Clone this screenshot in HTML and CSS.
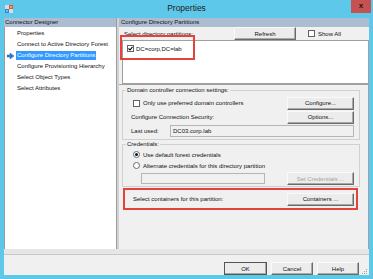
FILE: index.html
```html
<!DOCTYPE html>
<html lang="en">
<head>
  <meta charset="UTF-8">
  <title>Properties</title>
  <link rel="stylesheet" href="styles.css">
</head>
<body>

  <div class="window">
    <div class="titlebar">
      <svg class="app-icon" width="8" height="8" viewBox="0 0 8 8">
        <rect x="0" y="0" width="8" height="8" fill="#d9dde3"/>
        <rect x="4" y="0" width="4" height="4" fill="#e0552f"/>
        <rect x="5" y="1" width="2" height="2" fill="#f3a43a"/>
        <rect x="0" y="4" width="4" height="4" fill="#3a7fd0"/>
        <rect x="1" y="5" width="2" height="2" fill="#7fb4ec"/>
      </svg>
      <div class="title">Properties</div>
      <div class="close">x</div>
    </div>

    <div class="client">
      <div class="main">
        <div class="nav">
          <div class="pane-header">Connector Designer</div>
          <ul class="nav-list">
            <li class="nav-item"><span class="nav-mark"></span><span class="nav-text">Properties</span></li>
            <li class="nav-item"><span class="nav-mark"></span><span class="nav-text">Connect to Active Directory Forest</span></li>
            <li class="nav-item active">
              <span class="nav-mark">
                <svg width="7" height="6" viewBox="0 0 7 6"><polygon points="0,2 3,2 3,0 7,3 3,6 3,4 0,4" fill="#2a7de1" stroke="#1b4f99" stroke-width="0.4"/></svg>
              </span>
              <span class="nav-text">Configure Directory Partitions</span>
            </li>
            <li class="nav-item"><span class="nav-mark"></span><span class="nav-text">Configure Provisioning Hierarchy</span></li>
            <li class="nav-item"><span class="nav-mark"></span><span class="nav-text">Select Object Types</span></li>
            <li class="nav-item"><span class="nav-mark"></span><span class="nav-text">Select Attributes</span></li>
          </ul>
        </div>

        <div class="splitter"></div>

        <div class="page">
          <div class="pane-header page-header">Configure Directory Partitions</div>

          <div class="partitions">
            <div class="partitions-bar">
              <span class="bar-label">Select directory partitions:</span>
              <button class="btn btn-refresh">Refresh</button>
              <label class="check show-all"><span class="box"></span>Show All</label>
            </div>
            <div class="listbox">
              <div class="list-row">
                <span class="box checked">
                  <svg width="5" height="5" viewBox="0 0 5 5"><polyline points="0.5,2.5 2,4 4.5,0.8" fill="none" stroke="#000" stroke-width="1.1"/></svg>
                </span>
                DC=corp,DC=lab
              </div>
            </div>
            <div class="mark mark-partition"></div>
          </div>

          <div class="settings">
            <fieldset class="group">
              <legend>Domain controller connection settings:</legend>
              <div class="group-body">
                <div class="row">
                  <label class="check"><span class="box"></span>Only use preferred domain controllers</label>
                  <button class="btn btn-side">Configure...</button>
                </div>
                <div class="row">
                  <span>Configure Connection Security:</span>
                  <button class="btn btn-side">Options...</button>
                </div>
                <div class="row">
                  <span class="field-label">Last used:</span>
                  <div class="textbox">DC03.corp.lab</div>
                </div>
              </div>
            </fieldset>

            <fieldset class="group">
              <legend>Credentials:</legend>
              <div class="group-body cred-body">
                <div class="radio-row"><span class="radio selected"></span>Use default forest credentials</div>
                <div class="radio-row"><span class="radio"></span>Alternate credentials for this directory partition</div>
                <div class="row cred-row">
                  <div class="textbox textbox-cred"></div>
                  <button class="btn btn-side" disabled>Set Credentials ...</button>
                </div>
              </div>
            </fieldset>

            <div class="containers-row">
              <span>Select containers for this partition:</span>
              <button class="btn btn-side">Containers ...</button>
            </div>
          </div>
        </div>
      </div>

      <div class="footer">
        <div class="footer-sep"></div>
        <div class="footer-bar">
          <button class="btn btn-dialog btn-default">OK</button>
          <button class="btn btn-dialog">Cancel</button>
          <button class="btn btn-dialog">Help</button>
          <svg class="grip" width="7" height="7" viewBox="0 0 7 7">
            <rect x="5" y="1" width="1" height="1" fill="#a0a0a0"/>
            <rect x="3" y="3" width="1" height="1" fill="#a0a0a0"/>
            <rect x="5" y="3" width="1" height="1" fill="#a0a0a0"/>
            <rect x="1" y="5" width="1" height="1" fill="#a0a0a0"/>
            <rect x="3" y="5" width="1" height="1" fill="#a0a0a0"/>
            <rect x="5" y="5" width="1" height="1" fill="#a0a0a0"/>
          </svg>
        </div>
      </div>
    </div>
  </div>

</body>
</html>
```

FILE: styles.css
```css
body {
  margin: 0;
  font-family: "Liberation Sans", Arial, sans-serif;
  font-size: 6px;
  color: #111;
  background: #5ec8ea;
}

.window {
  width: 373px;
  height: 279px;
  background: #5ec8ea;
  display: flex;
  flex-direction: column;
}

/* title bar */
.titlebar {
  height: 18px;
  flex: none;
  display: grid;
  grid-template-columns: 1fr auto 1fr;
  align-items: start;
}

.app-icon {
  margin: 5px 0 0 5px;
}

.title {
  font-size: 8.5px;
  line-height: 17px;
  color: #1e1e1e;
}

.close {
  justify-self: end;
  margin-right: 2px;
  width: 20px;
  height: 13px;
  background: #c75150;
  color: #1a1a1a;
  font-weight: bold;
  font-size: 8px;
  line-height: 12px;
  text-align: center;
}

.client {
  flex: 1;
  margin: 0 4px 4px 4px;
  background: #f0f0f0;
  display: flex;
  flex-direction: column;
}

.main {
  height: 231px;
  display: flex;
}

/* left navigation */
.nav {
  width: 112px;
  display: flex;
  flex-direction: column;
}

.pane-header {
  height: 9px;
  line-height: 9px;
  padding-left: 1px;
  background: #adbdd1;
  white-space: nowrap;
  overflow: hidden;
}

.page-header {
  padding-left: 2px;
}

.nav-list {
  flex: 1;
  margin: 0;
  padding: 1px 0 0;
  list-style: none;
  background: #fff;
  border-left: 1px solid #9b9b9b;
}

.nav-item {
  height: 11px;
  display: flex;
  align-items: center;
  white-space: nowrap;
}

.nav-mark {
  width: 9px;
  padding-left: 2px;
  display: flex;
  align-items: center;
}

.nav-text {
  height: 9px;
  line-height: 9px;
  padding: 0 1px;
}

.nav-item.active .nav-text {
  background: #3399ff;
  color: #fff;
}

.splitter {
  width: 2px;
  background: #d2d2d2;
  border-left: 1px solid #9c9c9c;
}

/* right page */
.page {
  flex: 1;
  display: flex;
  flex-direction: column;
}

.partitions {
  position: relative;
  padding-left: 3px;
}

.partitions-bar {
  height: 13px;
  display: flex;
  align-items: center;
}

.bar-label {
  width: 110px;
  margin-left: 2px;
}

.btn {
  font-family: "Liberation Sans", Arial, sans-serif;
  font-size: 6px;
  color: #111;
  padding: 0;
  margin: 0;
  height: 13px;
  background: #ececec;
  border: 1px solid;
  border-color: #fafafa #6b6b6b #6b6b6b #fafafa;
  box-shadow: inset -1px -1px 0 #a8a8a8;
  white-space: nowrap;
}

.btn:disabled {
  color: #a3a3a3;
}

.btn-refresh {
  width: 62px;
}

.check {
  display: flex;
  align-items: center;
  white-space: nowrap;
}

.show-all {
  margin-left: 12px;
}

.box {
  width: 7px;
  height: 7px;
  box-sizing: border-box;
  border: 1px solid #626262;
  background: #fff;
  margin-right: 3px;
  display: flex;
  align-items: center;
  justify-content: center;
  flex: none;
}

.listbox {
  height: 44px;
  box-sizing: border-box;
  background: #fff;
  border: 1px solid #a0a0a0;
  padding: 4px 0 0 4px;
}

.list-row {
  display: flex;
  align-items: center;
  height: 7px;
}

.box.checked {
  margin-right: 2px;
}

.mark {
  position: absolute;
  border: 2px solid #e5423d;
  box-sizing: border-box;
}

.mark-partition {
  left: 1px;
  top: 8px;
  width: 75px;
  height: 25px;
}

.settings {
  flex: 1;
  border-top: 1px solid #a0a0a0;
  border-right: 1px solid #a0a0a0;
  padding-left: 3px;
}

.group {
  margin: 1px 0 0;
  padding: 0;
  width: 238px;
  box-sizing: border-box;
  min-width: 0;
  border: 1px solid #d0d0d0;
}

.group + .group {
  margin-top: 0;
}

legend {
  margin-left: 3px;
  padding: 0 1px;
  line-height: 8px;
}

.group-body {
  padding: 3px 5px 2px 8px;
}

.row {
  height: 12px;
  display: flex;
  align-items: center;
  white-space: nowrap;
}

.row + .row {
  margin-top: 2px;
}

.row .check {
  margin-left: 2px;
}

.btn-side {
  margin-left: auto;
  width: 67px;
}

.field-label {
  width: 39px;
}

.textbox {
  flex: 1;
  height: 12px;
  line-height: 11px;
  box-sizing: border-box;
  border: 1px solid #b5b5b5;
  background: #f0f0f0;
  padding-left: 2px;
}

.cred-body {
  padding-top: 1px;
  padding-bottom: 1px;
}

.radio-row {
  height: 11px;
  display: flex;
  align-items: center;
  white-space: nowrap;
}

.radio {
  width: 7px;
  height: 7px;
  box-sizing: border-box;
  border: 1px solid #6b6b6b;
  border-radius: 50%;
  background: #fff;
  margin: 0 3px 0 2px;
  display: flex;
  align-items: center;
  justify-content: center;
}

.radio.selected::after {
  content: "";
  width: 3px;
  height: 3px;
  border-radius: 50%;
  background: #111;
}

.row.cred-row {
  height: 13px;
  margin-top: 1px;
}

.textbox-cred {
  flex: none;
  width: 124px;
  height: 11px;
  margin-left: 10px;
}

.containers-row {
  margin: 1px 0 0 1px;
  width: 235px;
  height: 22px;
  box-sizing: border-box;
  border: 2px solid #e5423d;
  padding: 0 2px 0 8px;
  display: flex;
  align-items: center;
  white-space: nowrap;
}

/* bottom buttons */
.footer {
  flex: 1;
  display: flex;
  flex-direction: column;
}

.footer-sep {
  height: 5px;
  background: #e6e6e6;
  border-bottom: 1px solid #c8c8c8;
}

.footer-bar {
  flex: 1;
  display: flex;
  justify-content: flex-end;
  align-items: flex-end;
}

.btn-dialog {
  width: 42px;
  margin-left: 4px;
}

.btn-default {
  width: 43px;
  border-color: #555 #555 #555 #555;
}

.grip {
  margin: 0 1px 0 2px;
}
```
